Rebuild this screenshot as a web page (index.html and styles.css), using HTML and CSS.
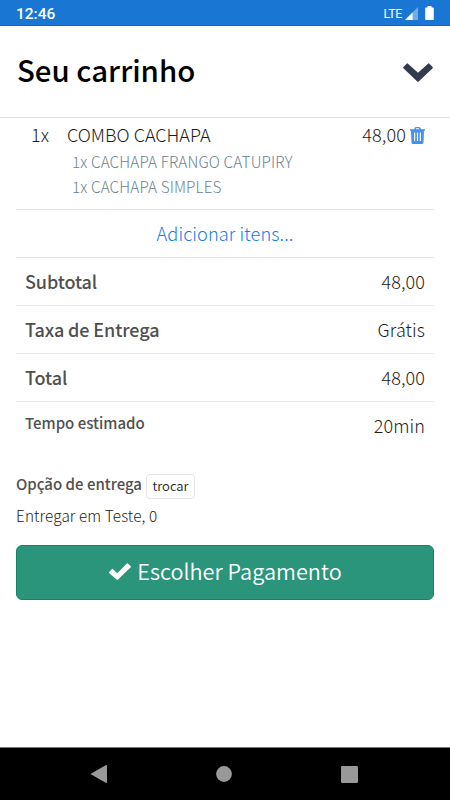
FILE: index.html
```html
<!DOCTYPE html>
<html lang="pt-BR">
<head>
<meta charset="utf-8">
<title>Seu carrinho</title>
<link rel="stylesheet" href="styles.css">
</head>
<body>
<div class="statusbar">
  <span class="clock">12:46</span>
  <span class="network">LTE</span>
  <svg class="signal" width="13" height="13" viewBox="0 0 13 13"><path d="M13 0V13H0z" fill="#72abe5"/><path d="M7.600 5.400V13H0z" fill="#fff"/></svg>
  <svg class="battery" width="9" height="14" viewBox="0 0 9 14"><path d="M2.500 0h4v1.500H8a.8.8 0 0 1 .8.8v10.900a.8.8 0 0 1-.8.8H1a.8.8 0 0 1-.8-.8V2.300A.8.8 0 0 1 1 1.500h1.500z" fill="#fff"/></svg>
</div>
<header class="header">
  <h1 class="title">Seu carrinho</h1>
  <svg class="chevron" width="30" height="19" viewBox="0 0 30 19"><path d="M.4 4 3.600.7a1 1 0 0 1 1.400 0L15 9.800 25 .7a1 1 0 0 1 1.400 0L29.600 4a1 1 0 0 1 0 1.300L15.700 18.500a1 1 0 0 1-1.400 0L.4 5.300A1 1 0 0 1 .4 4z" fill="#343a4e"/></svg>
</header>
<main class="cart">
  <section class="item">
    <div class="item-line">
      <span class="qty">1x</span>
      <span class="name">COMBO CACHAPA</span>
      <span class="price">48,00</span>
      <svg class="trash" width="15" height="17" viewBox="0 0 15 17"><path fill="#4391ec" fill-rule="evenodd" d="M0 2.200h4L5 .5Q5.300 0 6 0h3q.7 0 1 .5l1 1.700h4v1.600h-1L13.500 15.500Q13.400 17 12 17H3q-1.400 0-1.500-1.500L1 3.800H0zM5.700 2.200h3.600L8.800 1.200H6.200zM4 5.500V14h1.200V5.500zm2.900 0V14h1.200V5.500zm2.900 0V14H11V5.500z"/></svg>
    </div>
    <div class="sub">1x CACHAPA FRANGO CATUPIRY</div>
    <div class="sub">1x CACHAPA SIMPLES</div>
  </section>
  <div class="add"><a class="add-link">Adicionar itens...</a></div>
  <div class="row"><b class="label">Subtotal</b><span class="value">48,00</span></div>
  <div class="row"><b class="label">Taxa de Entrega</b><span class="value">Grátis</span></div>
  <div class="row"><b class="label">Total</b><span class="value">48,00</span></div>
  <div class="row row-time"><b class="label label-small">Tempo estimado</b><span class="value">20min</span></div>
  <div class="delivery"><b class="option">Opção de entrega</b><button class="change">trocar</button></div>
  <div class="address">Entregar em Teste, 0</div>
  <button class="pay"><svg class="check" width="22" height="17" viewBox="0 0 22 17"><path d="M.4 8.700 2.700 6.300a1 1 0 0 1 1.500 0l4 4L17.600.7a1 1 0 0 1 1.500 0L21.500 3a1 1 0 0 1 0 1.500L9 16.500a1 1 0 0 1-1.500 0L.4 10.200a1 1 0 0 1 0-1.500z" fill="#fff"/></svg><span class="pay-text">Escolher Pagamento</span></button>
</main>
<nav class="navbar">
  <svg width="16" height="18" viewBox="0 0 16 18"><path d="M.3 8.500 14.700.2q1.300-.4 1.300.8v16q0 1.200-1.300.8L.3 9.500q-.6-.5 0-1z" fill="#999"/></svg>
  <svg width="16" height="16" viewBox="0 0 16 16"><circle cx="8" cy="8" r="7.900" fill="#999"/></svg>
  <svg width="17" height="17" viewBox="0 0 17 17"><rect width="17" height="17" rx="1.300" fill="#999"/></svg>
</nav>
</body>
</html>
```
FILE: styles.css
```css
* { box-sizing: border-box; }
body {
  margin: 0;
  height: 800px;
  display: flex;
  flex-direction: column;
  background: #fff;
  color: #1c1c1c;
  font-family: "Noto Sans CJK SC", sans-serif;
  font-weight: 300;
  overflow: hidden;
}
svg { display: block; flex: none; }
span, b, a { white-space: nowrap; }
b { font-weight: 500; color: #505050; }
button { font: inherit; margin: 0; }
.statusbar {
  height: 26px;
  flex: none;
  display: flex;
  align-items: center;
  padding: 1px 16px 0 16px;
  background: #1976d2;
  border-bottom: 1px solid #1167bd;
  color: #fff;
  font-family: Roboto, sans-serif;
}
.clock { font-size: 15.500px; font-weight: 500; margin: 2px auto 0 0; }
.network { font-size: 12.500px; font-weight: 400; margin-right: 3px; letter-spacing: -.4px; }
.signal { margin-right: 7px; }
.header {
  height: 92px;
  flex: none;
  display: flex;
  align-items: center;
  justify-content: space-between;
  padding: 0 17px;
  border-bottom: 1px solid #dedede;
}
.title { margin: -5px 0 0; color: #000; font-size: 29.400px; line-height: 40px; font-weight: 500; }
.chevron { margin-top: 2px; }
.cart { flex: 1; padding: 0 16px; }
.item { height: 92px; padding-top: 2px; border-bottom: 1px solid #e6e6e6; }
.item-line { display: flex; height: 29px; line-height: 28px; font-size: 18px; padding: 0 9px 0 15px; }
.qty { width: 36px; }
.name { margin-right: auto; }
.price { letter-spacing: .15px; }
.trash { margin: 7px 0 0 4px; }
.sub { height: 25px; line-height: 25px; font-size: 15.300px; letter-spacing: .12px; color: #6b838f; padding-left: 56px; }
.add { height: 48px; line-height: 46px; text-align: center; border-bottom: 1px solid #e6e6e6; }
.add-link { color: #167bea; font-size: 18.200px; letter-spacing: .08px; }
.row {
  display: flex;
  justify-content: space-between;
  height: 48px;
  line-height: 46px;
  padding: 0 9px;
  border-bottom: 1px solid #ececec;
  font-size: 18px;
}
.value { letter-spacing: .1px; }
.label { letter-spacing: -.1px; }
.row-time { border: 0; }
.label-small { font-size: 15px; line-height: 41px; letter-spacing: 0; }
.delivery { display: flex; height: 25px; margin-top: 24px; line-height: 20px; }
.option { font-size: 15px; }
.change {
  height: 25px;
  width: 49px;
  margin-left: 4px;
  padding: 0 0 2px;
  font-size: 13px;
  font-weight: 350;
  line-height: 21px;
  background: #fff;
  border: 1px solid #e3e6e8;
  border-radius: 4px;
  color: #212529;
}
.address { height: 46px; line-height: 32px; font-size: 15.300px; letter-spacing: .12px; color: #222; }
.pay {
  display: flex;
  align-items: center;
  justify-content: center;
  gap: 6px;
  width: 418px;
  height: 55px;
  border: 1px solid #138564;
  border-radius: 6px;
  background: #2a957a;
  color: #fff;
  font-size: 21.700px;
  font-weight: 350;
  padding: 0 0 0 1px;
}
.pay-text { margin-top: -5px; }
.check { margin-top: -3px; }
.navbar {
  height: 53px;
  flex: none;
  display: flex;
  align-items: center;
  justify-content: space-between;
  background: #000;
  border-top: 1px solid #777;
  padding: 0 92px 0 91px;
}
```
